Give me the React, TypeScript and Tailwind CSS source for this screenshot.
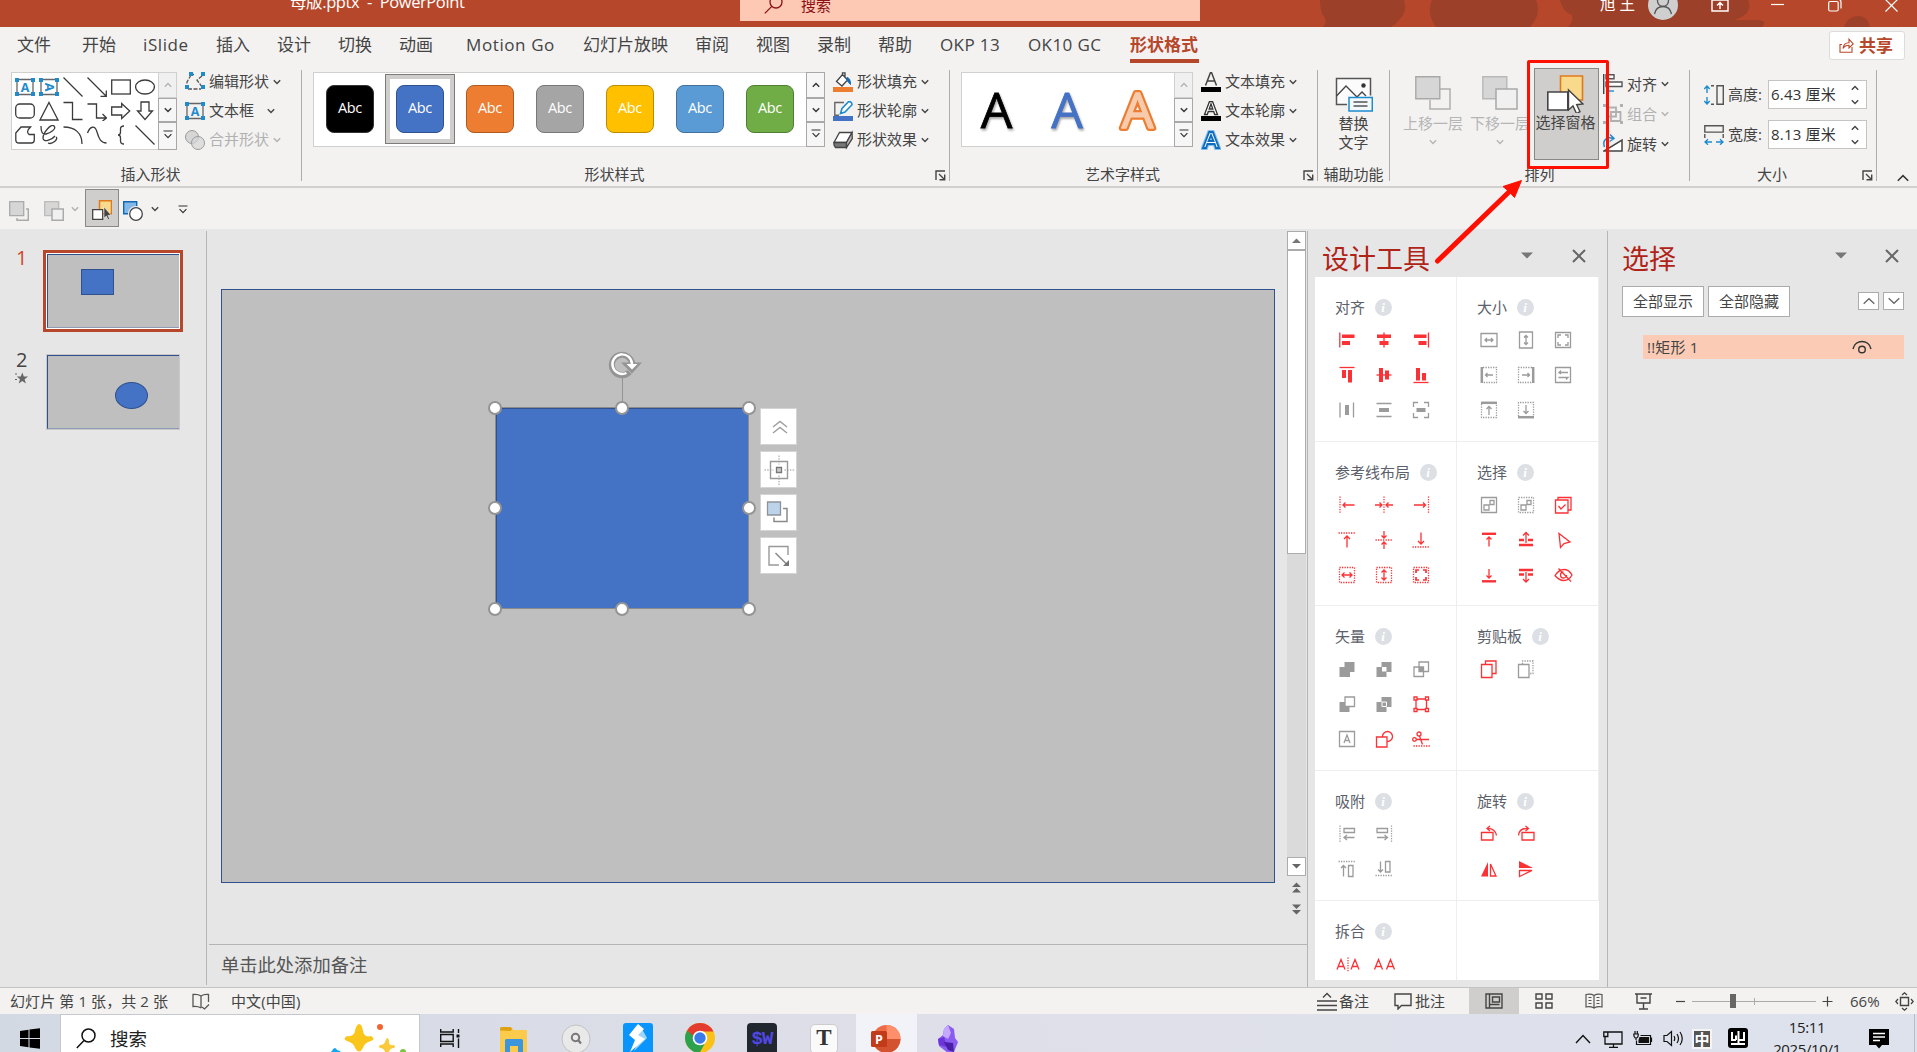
import React from 'react';

type Kids = { children?: React.ReactNode };

const G = '#444444';
const R = '#fa3236';
const M = '#9b9b9b';
const B = '#1e8bcd';

function Ico({ w = 20, h = 20, c = '', children }: Kids & { w?: number; h?: number; c?: string }) {
  return (
    <svg width={w} height={h} viewBox={`0 0 ${w} ${h}`} fill="none" className={`shrink-0 ${c}`}>
      {children}
    </svg>
  );
}

function Chev({ color = G, c = '', up = false }: { color?: string; c?: string; up?: boolean }) {
  return (
    <Ico w={8} h={6} c={c}>
      <path d={up ? 'M.8 4.8 4 1.6l3.2 3.2' : 'M.8 1.2 4 4.4l3.2-3.2'} stroke={color} strokeWidth="1.4" />
    </Ico>
  );
}

function More({ c = '' }: { c?: string }) {
  return (
    <Ico w={10} h={9} c={c}>
      <path d="M.5 1h9M1.6 4.2 5 7.6l3.4-3.4" stroke="#333" strokeWidth="1.2" />
    </Ico>
  );
}

/* ---------- title bar ---------- */

function TitleBar() {
  return (
    <header className="relative flex h-[27px] shrink-0 items-start overflow-hidden bg-[#b7472a] text-white">
      <svg width="597" height="27" className="absolute right-0 top-0" fill="#9c4029">
        <path d="M0 0h84q4 12-5 20-4 5-8 7H3q6-6-1-13Q0 6 0 0Z" />
        <path d="M112 0h104q6 14-6 27H116q-10-14-4-27Z" />
        <path d="M240 0h188q6 14-14 20l20 0q12 0 10 4l-2 3H248q6-6 4-12-10-4-12-15Z" />
        <path d="M524 27q4-11 14-11t12 11Z" />
      </svg>
      <div className="relative ml-[290px] -mt-[9px] w-[450px] whitespace-pre text-[16.5px] leading-[22px] tracking-[-0.4px]">母版.pptx&nbsp; -&nbsp; PowerPoint</div>
      <div className="relative flex h-[21px] w-[460px] items-start bg-[#fdc9b5] text-[#8c1116]">
        <Ico w={20} h={20} c="ml-[24px] -mt-[6px]">
          <circle cx="12" cy="8" r="6" stroke="#8c1116" strokeWidth="1.3" />
          <path d="M7.8 12.4.8 19.4" stroke="#8c1116" strokeWidth="1.3" />
        </Ico>
        <div className="-mt-[5px] ml-[17px] text-[15px] leading-[20px]">搜索</div>
      </div>
      <div className="relative -mt-[7px] ml-[400px] text-[15.5px] leading-[22px]">旭 王</div>
      <Ico w={30} h={30} c="relative -mt-[10px] ml-[13px]">
        <circle cx="15" cy="15" r="15" fill="#cfcfcf" />
        <circle cx="15" cy="11" r="5.5" stroke="#555" strokeWidth="1.3" />
        <path d="M6.5 24c1-5 4-7.500 8.500-7.500s7.500 2.500 8.500 7.500" stroke="#555" strokeWidth="1.300" />
      </Ico>
      <Ico w={18} h={16} c="relative -mt-[4px] ml-[33px]">
        <path d="M1 1h16v14H1zM1 4h16M9 13V7M6 9.500 9 6.500l3 3" stroke="#fff" strokeWidth="1.400" />
      </Ico>
      <Ico w={13} h={8} c="relative ml-[42px]">
        <path d="M0 4.500h13" stroke="#fff" strokeWidth="1.200" />
      </Ico>
      <Ico w={14} h={14} c="relative -mt-[2px] ml-[44px]">
        <rect x=".7" y="3.500" width="9.500" height="9.500" rx="1.500" stroke="#fff" strokeWidth="1.200" />
        <path d="M3.500 1h6q3.500 0 3.500 3.500v6" stroke="#fff" strokeWidth="1.200" />
      </Ico>
      <Ico w={13} h={13} c="relative -mt-[1px] ml-[43px]">
        <path d="m.5.5 12 12M12.500.5l-12 12" stroke="#fff" strokeWidth="1.200" />
      </Ico>
    </header>
  );
}

/* ---------- tabs ---------- */

const tabs: [string, string][] = [
  ['文件', 'w-[65px]'],
  ['开始', 'w-[61px]'],
  ['iSlide', 'w-[73px] tracking-[0.6px]'],
  ['插入', 'w-[61px]'],
  ['设计', 'w-[61px]'],
  ['切换', 'w-[61px]'],
  ['动画', 'w-[67px]'],
  ['Motion Go', 'w-[117px] tracking-[0.6px]'],
  ['幻灯片放映', 'w-[112px]'],
  ['审阅', 'w-[61px]'],
  ['视图', 'w-[61px]'],
  ['录制', 'w-[61px]'],
  ['帮助', 'w-[62px]'],
  ['OKP 13', 'w-[88px] tracking-[0.4px]'],
  ['OK10 GC', 'w-[102px] tracking-[0.4px]'],
];

function Tabs() {
  return (
    <nav className="flex h-[39px] shrink-0 items-start pl-[17px] pt-[5px] text-[17px] leading-[26px] text-[#444]">
      {tabs.map(([t, w]) => (
        <div key={t} className={`${w} shrink-0 whitespace-nowrap`}>{t}</div>
      ))}
      <div className="h-[31px] w-[69px] shrink-0 whitespace-nowrap border-b-4 border-[#b7472a] font-bold text-[#b7472a]">形状格式</div>
      <div className="-mt-px ml-auto mr-[12px] flex h-[29px] w-[76px] items-center rounded-[3px] border border-[#dcdcdc] bg-white font-bold text-[#b7472a]">
        <Ico w={15} h={15} c="ml-[9px] mr-[5px]">
          <path d="M3 6.500H1v7.800h12V9M4 10.500c.5-4 2.500-5.800 6-5.800V1.200L14.200 6 10 10V7.300c-2.800 0-4.500.8-6 3.200Z" stroke="#b7472a" strokeWidth="1.100" />
        </Ico>
        共享
      </div>
    </nav>
  );
}

/* ---------- ribbon ---------- */

function Launcher() {
  return (
    <Ico w={11} h={11}>
      <path d="M1 10V1h9M4 4l5 5M9.700 4.500v5.200H4.500" stroke={G} strokeWidth="1.400" />
    </Ico>
  );
}

function Group({ w, label, launch, children }: Kids & { w: string; label: string; launch?: boolean }) {
  return (
    <section className={`${w} flex shrink-0`}>
      <div className="flex min-w-0 flex-1 flex-col">
        <div className="flex h-[97px] items-start">{children}</div>
        <div className="flex h-[22px] items-center text-[15px] leading-none text-[#444]">
          <div className="flex-1 whitespace-nowrap text-center">{label}</div>
          {launch && (
            <div className="w-[22px] pl-[8px] pt-[3px]">
              <Launcher />
            </div>
          )}
        </div>
      </div>
      <div className="mt-[4px] h-[111px] w-px bg-[#b0aeac]" />
    </section>
  );
}

function Scroller({ off, tall }: { off?: boolean; tall?: boolean }) {
  return (
    <div className="flex w-[19px] shrink-0 flex-col">
      <div className={`flex flex-1 items-center justify-center border ${off ? 'border-[#d2d0ce] bg-[#f0f0f0]' : 'border-[#aaa8a6] bg-[#f6f6f6]'}`}>
        <Chev up color={off ? '#b5b5b5' : '#333'} />
      </div>
      <div className="flex h-[24px] items-center justify-center border border-[#aaa8a6] bg-[#f6f6f6]">
        <Chev color="#333" />
      </div>
      <div className={`flex items-center justify-center border border-[#aaa8a6] bg-[#f6f6f6] ${tall ? 'h-[28px] pb-[3px]' : 'h-[25px] pb-[2px]'}`}>
        <More />
      </div>
    </div>
  );
}

function TextBoxIcon({ turn }: { turn?: boolean }) {
  return (
    <>
      <path d="M2 2.500h16v15H2z" stroke="#666" strokeWidth="1.300" />
      <path d="M0 1h4v4H0zM16 1h4v4h-4zM0 15h4v4H0zM16 15h4v4h-4z" fill={B} />
      <text x="10" y="14.500" textAnchor="middle" fontSize="12.500" fontWeight="700" fill={B} transform={turn ? 'rotate(90 10 10)' : undefined}>A</text>
    </>
  );
}

const S = { stroke: '#3b3b3b', strokeWidth: 1.3 };
const shapes: React.ReactNode[] = [
  <TextBoxIcon />,
  <TextBoxIcon turn />,
  <path d="m.5.5 19 19" {...S} />,
  <path d="m.5.5 18.500 18.500M19.300 13.500v5.800h-5.800" {...S} />,
  <rect x=".7" y="3" width="18.600" height="14" {...S} />,
  <ellipse cx="10" cy="10" rx="9.400" ry="7" {...S} />,
  <rect x=".7" y="3" width="18.600" height="14" rx="4" {...S} />,
  <path d="M10 1.500 19 19H1Z" {...S} />,
  <path d="M.5 1.500h9v17h10" {...S} />,
  <path d="M.5 3h9v14h9.500M15.500 13l4 4-4 3" {...S} />,
  <path d="M.7 6h10V2.500l8 7.500-8 7.500V14H.7Z" {...S} />,
  <path d="M6 1h8v9h3.500L10 18.500 2.500 10H6Z" {...S} />,
  <path d="M.8 8 6 2h9.500q-5 5-1.500 7.500h5.300V15q0 3-3 3H4q-3.200 0-3.200-3Z" {...S} />,
  <path d="M2 1c0 5 1 9 5 8s11-5 8-8S4 8 4 13s9 2 12-2M9 18c4 2 11-4 8-6" {...S} />,
  <path d="M.5 2C12 2 19 8 19 19" {...S} />,
  <path d="M.5 8C3 1 8 0 10 7s4 11 9.500 11" {...S} />,
  <path d="M13 1c-3 0-3.500 1-3.500 3v3c0 2-.8 3-2.500 3 1.700 0 2.500 1 2.500 3v3c0 2 .5 3 3.500 3" {...S} />,
  <path d="m.5.5 19 19" {...S} />,
];

function ShapeGallery() {
  return (
    <div className="ml-[11px] mt-[6px] flex h-[78px] w-[166px] shrink-0 border border-[#d2d0ce] bg-white">
      <div className="grid w-[146px] grid-cols-[repeat(6,24px)] content-start gap-y-[4px] pl-[3px] pt-[4px]">
        {shapes.map((s, i) => (
          <Ico key={i}>{s}</Ico>
        ))}
      </div>
      <div className="-my-px -mr-px flex">
        <Scroller off tall />
      </div>
    </div>
  );
}

type RowDef = { icon: React.ReactNode; label: string; gap?: string; off?: boolean };

function CommandColumn({ rows, c, rowH = 'h-[29px]' }: { rows: RowDef[]; c: string; rowH?: string }) {
  return (
    <div className={`${c} flex shrink-0 flex-col`}>
      {rows.map((r) => (
        <div key={r.label} className={`flex items-center ${rowH}`}>
          <Ico>{r.icon}</Ico>
          <span className={`ml-[4px] whitespace-nowrap text-[15px] leading-none ${r.off ? 'text-[#b1b1b1]' : 'text-[#444]'}`}>{r.label}</span>
          <Chev c={r.gap ?? 'ml-[4px]'} color={r.off ? '#b1b1b1' : G} />
        </div>
      ))}
    </div>
  );
}

const tiles: [string, string][] = [
  ['bg-black', 'border-[#333]'],
  ['bg-[#4472c4]', 'border-[#2f528f]'],
  ['bg-[#ed7d31]', 'border-[#ae5a21]'],
  ['bg-[#a5a5a5]', 'border-[#787878]'],
  ['bg-[#ffc000]', 'border-[#bc8c00]'],
  ['bg-[#5b9bd5]', 'border-[#41719c]'],
  ['bg-[#70ad47]', 'border-[#507e32]'],
];

function StyleGallery() {
  return (
    <div className="ml-[11px] mt-[6px] flex h-[75px] w-[512px] shrink-0 border border-[#d2d0ce] bg-white">
      <div className="flex w-[492px] pl-px pt-px">
        {tiles.map(([bg, bd], i) => (
          <div key={bg} className={`flex h-[70px] w-[70px] shrink-0 items-center justify-center ${i === 1 ? 'border border-[#7d7b79] shadow-[inset_0_0_0_4px_#d0cecc]' : ''}`}>
            <div className={`flex h-[48px] w-[48px] items-center justify-center rounded-[8px] border pb-[2px] font-['Open_Sans'] text-[14.5px] tracking-tight text-white ${bg} ${bd}`}>Abc</div>
          </div>
        ))}
      </div>
      <div className="-my-px -mr-px flex">
        <Scroller />
      </div>
    </div>
  );
}

function WordArtGallery() {
  return (
    <div className="ml-[11px] mt-[6px] flex h-[75px] w-[232px] shrink-0 border border-[#d2d0ce] bg-white">
      <svg width="212" height="73" className="shrink-0 font-['Open_Sans']" fontSize="50" textAnchor="middle" fontWeight="500">
        <g className="[filter:drop-shadow(1px_2px_1px_rgba(0,0,0,0.35))]" strokeWidth=".8">
          <text x="34.500" y="55" fill="#000" stroke="#000">A</text>
          <text x="105" y="55" fill="#4472c4" stroke="#4472c4">A</text>
        </g>
        <text x="175.500" y="55" fill="#f8cbad" stroke="#ed7d31" strokeWidth="6" strokeLinejoin="round">A</text>
        <text x="175.500" y="55" fill="#f8cbad" stroke="#f8cbad" strokeWidth="1.500" strokeLinejoin="round">A</text>
      </svg>
      <div className="-my-px -mr-px flex">
        <Scroller off />
      </div>
    </div>
  );
}

const editRows: RowDef[] = [
  {
    label: '编辑形状',
    icon: (
      <>
        <path d="M5 2.500h4M6 3 2 10v6M3 17h13M17 4l-5 4 5 7" stroke="#555" strokeWidth="1.300" strokeDasharray="4 1.500" />
        <path d="M4 0h4v4H4zM16 0h4v4h-4zM0 13h4v4H0zM16 13h4v4h-4z" fill={B} />
      </>
    ),
  },
  { label: '文本框', gap: 'ml-[13px]', icon: <TextBoxIcon /> },
  {
    label: '合并形状',
    off: true,
    icon: (
      <>
        <circle cx="7" cy="7" r="6.500" fill="#d6d6d6" stroke="#9a9a9a" />
        <circle cx="13" cy="13" r="6.500" fill="#d6d6d6" fillOpacity=".7" stroke="#9a9a9a" />
      </>
    ),
  },
];

const shapeRows: RowDef[] = [
  {
    label: '形状填充',
    icon: (
      <>
        <path d="m3.500 9.500 6-7 5 5.500-5.500 6ZM9.500 2.500V.8h2.500V5" stroke="#444" strokeWidth="1.300" fill="#fff" />
        <path d="M14 5.500q3.500.5 3.500 7l-3.500-4Z" fill="#1268b3" stroke="#1268b3" />
        <path d="M0 15h20v5H0z" fill="#ed7d31" />
      </>
    ),
  },
  {
    label: '形状轮廓',
    icon: (
      <>
        <path d="M11 1.500H1.800v12.700H6" stroke="#666" strokeWidth="1.400" />
        <path d="m7.500 12.500 1.500-5L15.500.8q3.500-.5 3.500 3L12 11Z" stroke={B} strokeWidth="1.600" fill="#fff" />
        <path d="M0 15h20v5H0z" fill="#4472c4" />
      </>
    ),
  },
  {
    label: '形状效果',
    icon: (
      <>
        <path d="M6.500 2.500h12.500l-5.500 10H1Z" fill="#fff" stroke="#444" strokeWidth="1.300" />
        <path d="M1 12.500h12.500v5H2.500L1 15Z" fill="#777" stroke="#444" strokeWidth="1.300" />
        <path d="m19 2.500.3 6-5.800 9v-5Z" fill="#bbb" stroke="#444" strokeWidth="1.300" />
      </>
    ),
  },
];

const textRows: RowDef[] = [
  {
    label: '文本填充',
    icon: (
      <>
        <path d="m4.500 13.500 5-13h1l5 13M6.300 9h7.400" stroke="#444" strokeWidth="1.500" />
        <path d="M0 15h20v5H0z" fill="#000" />
      </>
    ),
  },
  {
    label: '文本轮廓',
    icon: (
      <>
        <path d="M3.500 13.500 8.400.7h3.200l4.900 12.800h-2.800l-1-3H7.300l-1 3ZM8.200 8h3.600L10 3Z" stroke="#333" strokeWidth="1.300" fill="#fff" />
        <path d="M0 15h20v5H0z" fill="#000" />
      </>
    ),
  },
  {
    label: '文本效果',
    icon: (
      <>
        <path d="M2 18 8.200 2h3.600L18 18h-3l-1.400-4H6.400L5 18ZM7.500 11h5L10 5Z" stroke="#7fc0ee" strokeWidth="4" />
        <path d="M2 18 8.200 2h3.600L18 18h-3l-1.400-4H6.400L5 18ZM7.500 11h5L10 5Z" stroke="#0f6cbd" strokeWidth="1.800" fill="#fff" />
      </>
    ),
  },
];

const arrangeRows: RowDef[] = [
  {
    label: '对齐',
    icon: (
      <>
        <path d="M.7 0v20" stroke="#444" strokeWidth="1.400" />
        <path d="M3 .8h8v4H3zM3 8h16v4.500H3z" stroke="#555" strokeWidth="1.400" fill="#fff" />
        <path d="M3 17h8" stroke={B} strokeWidth="1.400" />
      </>
    ),
  },
  {
    label: '组合',
    off: true,
    icon: (
      <>
        <path d="M4 3.500h9v9H4zM8 8h9.500v9H8z" stroke="#b0b0b0" strokeWidth="1.800" />
        <path d="M0 0h3v3H0zM17 0h3v3h-3zM0 17h3v3H0zM17 17h3v3h-3z" fill="#b0b0b0" />
      </>
    ),
  },
  {
    label: '旋转',
    icon: (
      <>
        <path d="M1 17h18V6Z" stroke="#444" strokeWidth="1.500" fill="#fff" />
        <path d="M1.500 13C-1 6 4 2 10 4.500M7 .5l4 4-4.500 3" stroke={B} strokeWidth="1.500" />
      </>
    ),
  },
];

function BigButton({ icon, lines, c, chev, off }: { icon: React.ReactNode; lines: string[]; c: string; chev?: boolean; off?: boolean }) {
  return (
    <div className={`flex shrink-0 flex-col items-center text-[15px] leading-[19px] ${off ? 'text-[#b5b5b5]' : 'text-[#444]'} ${c}`}>
      <Ico w={38} h={38}>{icon}</Ico>
      {lines.map((l) => (
        <div key={l} className="whitespace-nowrap">{l}</div>
      ))}
      {chev && <Chev c="mt-[6px]" color="#b5b5b5" />}
    </div>
  );
}

function SizeRow({ icon, label, value }: { icon: React.ReactNode; label: string; value: string }) {
  return (
    <div className="flex h-[29px] items-center">
      <Ico>{icon}</Ico>
      <span className="ml-[4px] w-[40px] whitespace-nowrap text-[15px] leading-none text-[#444]">{label}</span>
      <div className="flex h-[29px] w-[99px] items-center justify-between border border-[#c6c4c2] bg-white pl-[2px] pr-[7px]">
        <span className="whitespace-nowrap text-[15px] leading-none tracking-[0.2px] text-[#333]">{value}</span>
        <div className="flex flex-col gap-[8px]">
          <Chev up />
          <Chev />
        </div>
      </div>
    </div>
  );
}

function SelectPaneGlyph() {
  return (
    <>
      <path d="M14.500 1h22v24h-22z" fill="#f9d98c" stroke="#e07b1a" strokeWidth="1.600" />
      <path d="M1.800 17h20v18h-20z" fill="#fff" stroke="#444" strokeWidth="1.600" />
      <path d="m22.500 15 0 20 4.500-4 3.500 7.500 3.500-1.800-3.300-7 6.300-.7Z" fill="#fff" stroke="#444" strokeWidth="1.400" />
    </>
  );
}

function Ribbon() {
  return (
    <div className="flex h-[122px] shrink-0 border-b-2 border-[#d2d0ce]">
      <Group w="w-[302px]" label="插入形状">
        <ShapeGallery />
        <CommandColumn rows={editRows} c="ml-[8px] mt-[1px]" />
      </Group>
      <Group w="w-[648px]" label="形状样式" launch>
        <StyleGallery />
        <CommandColumn rows={shapeRows} c="ml-[8px] mt-[1px]" />
      </Group>
      <Group w="w-[368px]" label="艺术字样式" launch>
        <WordArtGallery />
        <CommandColumn rows={textRows} c="ml-[8px] mt-[1px]" />
      </Group>
      <Group w="w-[72px]" label="辅助功能">
        <BigButton
          c="mx-auto mt-[10px]"
          lines={['替换', '文字']}
          icon={
            <>
              <path d="M12 28.500H1.500v-26h34v17" stroke="#555" strokeWidth="1.500" fill="#fbfbfb" />
              <path d="m1.500 20 9.500-10 11 11 5-5 4 4" stroke="#444" strokeWidth="1.300" />
              <circle cx="28.500" cy="9.500" r="2.200" fill="#333" />
              <path d="M14 21.500h23.300V35H14z" fill="#f2f8fc" stroke={B} strokeWidth="1.500" />
              <path d="M18.500 26h14M18.500 30h14" stroke="#555" strokeWidth="1.300" />
            </>
          }
        />
      </Group>
      <Group w="w-[300px]" label="排列">
        <BigButton
          off
          chev
          c="ml-[13px] mt-[10px] w-[60px]"
          lines={['上移一层']}
          icon={
            <>
              <path d="M26 13h10v20H16V24" stroke="#b0b0b0" strokeWidth="1.500" />
              <path d="M1.800.700h24v22h-24z" fill="#d6d6d6" stroke="#a8a8a8" strokeWidth="1.400" />
            </>
          }
        />
        <BigButton
          off
          chev
          c="ml-[7px] mt-[10px] w-[60px]"
          lines={['下移一层']}
          icon={
            <>
              <path d="M1.800.700h24v22h-24z" fill="#d6d6d6" stroke="#b8b8b8" strokeWidth="1.400" />
              <path d="M15 13h21v20H15z" fill="#f0f0f0" stroke="#a8a8a8" strokeWidth="1.500" />
            </>
          }
        />
        <div className="ml-[4px] mt-[2px] flex h-[92px] w-[65px] shrink-0 justify-center border border-[#8a8886] bg-[#d0cecc] pr-[2px]">
          <BigButton c="mt-[6px]" lines={['选择窗格']} icon={<SelectPaneGlyph />} />
        </div>
        <CommandColumn rows={arrangeRows} rowH="h-[30px]" c="ml-[4px] mt-[3px]" />
      </Group>
      <Group w="w-[187px]" label="大小" launch>
        <div className="ml-[14px] mt-[14px] flex flex-col gap-[11px]">
          <SizeRow
            label="高度:"
            value="6.43 厘米"
            icon={
              <>
                <path d="M3 1v7M3 12v7M.3 4 3 1l2.700 3M.3 16 3 19l2.700-3" stroke={B} strokeWidth="1.400" />
                <path d="M13 .8h6.300v18.400H13zM7 .8h3M7 19.200h3" stroke="#555" strokeWidth="1.400" />
              </>
            }
          />
          <SizeRow
            label="宽度:"
            value="8.13 厘米"
            icon={
              <>
                <path d="M1 17h7M12 17h7M4 14.300 1 17l3 2.700M16 14.300l3 2.700-3 2.700" stroke={B} strokeWidth="1.400" />
                <path d="M.8.800h18.400v6.300H.8zM.8 9v4M19.200 9v4" stroke="#555" strokeWidth="1.400" />
              </>
            }
          />
        </div>
      </Group>
      <Ico w={12} h={8} c="ml-[20px] mt-[108px]">
        <path d="M.8 6.800 6 1.600l5.200 5.200" stroke="#333" strokeWidth="1.500" />
      </Ico>
    </div>
  );
}

function QuickAccess() {
  return (
    <div className="flex h-[41px] shrink-0 items-center pb-px">
      <Ico c="ml-[9px] mt-[5px]">
        <path d="M.7.700h14v14H.7z" fill="#d6d6d6" stroke="#aaa" strokeWidth="1.300" />
        <path d="M17 8h2.300v11.300H8V17" stroke="#aaa" strokeWidth="1.500" />
      </Ico>
      <Ico c="ml-[15px] mt-[5px]">
        <path d="M.7.700h14v14H.7z" fill="#d6d6d6" stroke="#bbb" strokeWidth="1.300" />
        <path d="M8 8h11.300v11.300H8z" fill="#f0f0f0" stroke="#aaa" strokeWidth="1.500" />
      </Ico>
      <Chev c="ml-[7px] mt-px" color="#b1b1b1" />
      <div className="ml-[6px] flex h-[38px] w-[34px] items-center justify-center border border-[#8a8886] bg-[#d0cecc]">
        <Ico c="mt-[4px]">
          <path d="M7.500.800h12v13h-12z" fill="#f9d98c" stroke="#e07b1a" strokeWidth="1.500" />
          <path d="M.7 9.700h10v9.600H.7z" fill="#fff" stroke="#444" strokeWidth="1.300" />
          <path d="M12 7v11l2.300-2 1.800 3.800 1.500-.8-1.700-3.500 3-.5Z" fill="#444" stroke="#fff" strokeWidth=".5" />
        </Ico>
      </div>
      <Ico c="ml-[4px] mt-[5px]">
        <path d="M.7.700h13v12H.7z" fill="#83b9ea" stroke="#1268b3" strokeWidth="1.400" />
        <circle cx="13" cy="13" r="8" fill="#f3f2f1" />
        <circle cx="13" cy="13" r="6.300" fill="#fff" stroke="#444" strokeWidth="1.300" />
      </Ico>
      <Chev c="ml-[8px] mt-px" />
      <More c="ml-[19px] mt-[2px]" />
    </div>
  );
}

/* ---------- slide thumbnails ---------- */

function Thumbnails() {
  return (
    <aside className="flex w-[206px] shrink-0 flex-col">
      <div className="mt-[21px] flex">
        <div className="w-[43px] pl-[16px] text-[20px] leading-[16px] text-[#d24726]">1</div>
        <div className="h-[82px] w-[140px] border-[3px] border-[#b7472a] bg-white p-px">
          <div className="h-full border-b border-l border-t border-b-[#8f9bb5] border-l-[#2f528f] border-t-[#2f528f] bg-[#bfbfbf]">
            <div className="ml-[33px] mt-[14px] h-[26px] w-[33px] border border-[#2f528f] bg-[#4472c4]" />
          </div>
        </div>
      </div>
      <div className="mt-[22px] flex">
        <div className="flex w-[46px] flex-col pl-[16px] text-[20px] text-[#444]">
          <div className="h-[18px] leading-[11px]">2</div>
          <Ico w={13} h={12} c="-ml-px">
            <path d="m7.300.5 1.500 4H13L9.600 7.200l1.300 4.300L7.300 9l-3.600 2.500L5 7.200 1.800 4.600h4Z" fill="#666" />
            <path d="M0 2h2M0 7.500h2" stroke="#666" />
          </Ico>
        </div>
        <div className="h-[76px] w-[134px] border border-[#c9c9c9]">
          <div className="h-full border-b border-l border-t border-b-[#8f9bb5] border-l-[#2f528f] border-t-[#2f528f] bg-[#bfbfbf]">
            <div className="ml-[67px] mt-[26px] h-[27px] w-[33px] rounded-[50%] border border-[#2f528f] bg-[#4472c4]" />
          </div>
        </div>
      </div>
    </aside>
  );
}

/* ---------- slide canvas ---------- */

const handles = ['left-[-8px] top-[-7px]', 'left-[119px] top-[-7px]', 'left-[246px] top-[-7px]', 'left-[-8px] top-[93px]', 'left-[246px] top-[93px]', 'left-[-8px] top-[194px]', 'left-[119px] top-[194px]', 'left-[246px] top-[194px]'];

const sideIcons: React.ReactNode[] = [
  <path d="m11 19 7-5.500 7 5.500M11 25l7-5.500 7 5.500" transform="translate(1 -1)" stroke="#a0a0a0" strokeWidth="1.500" />,
  <>
    <path d="M9.500 9.500h17v17h-17z" stroke="#999" strokeWidth="1.400" />
    <path d="M15.500 15.500h5v5h-5z" fill="#ccc" stroke="#777" strokeWidth="1.300" />
    <path d="M18 3.500v9M18 23.500v10M3.500 18h9M23.500 18h10" stroke="#999" strokeDasharray="1.500 1.200" />
  </>,
  <>
    <path d="M6.500 7h13v13h-13z" fill="#bdd3ea" stroke="#8f9399" strokeWidth="1.300" />
    <path d="M22 13.500h4v13H13V22.500" stroke="#8a8a8a" strokeWidth="1.500" />
  </>,
  <>
    <path d="M27 17V8.500H8v18.500h10" stroke="#999" strokeWidth="1.400" />
    <path d="m14.500 15 12 12" stroke="#8a8a8a" strokeWidth="1.500" />
    <path d="M28 22v6h-6Z" fill="#777" />
  </>,
];

function Slide() {
  return (
    <div className="relative ml-[14px] mt-[60px] h-[594px] w-[1054px] border border-[#2f528f] bg-[#bfbfbf]">
      <div className="absolute left-[273px] top-[117px] h-[202px] w-[254px] border border-[#8c8c8c] bg-[#4472c4] shadow-[inset_1px_1px_0_#2f528f]">
        <div className="absolute left-[126px] top-[-31px] h-[30px] w-px bg-[#949494]" />
        <svg width="34" height="28" viewBox="0 0 34 28" fill="none" className="absolute left-[112px] top-[-57px]">
          <path d="M21.500 21A10.200 10.200 0 1 1 24.200 13" stroke="#949494" strokeWidth="6" />
          <path d="M13 11.500h21L24 22.500Z" fill="#949494" />
          <path d="M18.500 22A9.800 9.800 0 1 1 24 13" stroke="#fff" strokeWidth="2.400" />
          <path d="M18.500 13h11L24 18.500Z" fill="#fff" />
        </svg>
        {handles.map((p) => (
          <div key={p} className={`absolute h-[14px] w-[14px] rounded-full border-2 border-[#949494] bg-white ${p}`} />
        ))}
      </div>
      <div className="absolute left-[538px] top-[118px] flex flex-col gap-[6px]">
        {sideIcons.map((s, i) => (
          <div key={i} className="h-[37px] w-[37px] border border-[#d4d4d4] bg-white">
            <Ico w={35} h={35}>{s}</Ico>
          </div>
        ))}
      </div>
    </div>
  );
}

function Editor() {
  return (
    <main className="flex min-w-0 flex-1 flex-col">
      <div className="flex h-[715px]">
        <div className="w-[1080px] shrink-0">
          <Slide />
        </div>
        <div className="mt-[2px] flex w-[19px] flex-col items-center">
          <div className="flex h-[19px] w-[19px] items-center justify-center border border-[#ababab] bg-white">
            <Ico w={9} h={5}><path d="M0 5 4.500.500 9 5Z" fill="#777" /></Ico>
          </div>
          <div className="h-[304px] w-[19px] border border-[#ababab] bg-white" />
          <div className="h-[303px] w-[19px] bg-[#dadada]" />
          <div className="flex h-[19px] w-[19px] items-center justify-center border border-[#ababab] bg-white">
            <Ico w={9} h={5}><path d="M0 0 4.500 4.500 9 0Z" fill="#666" /></Ico>
          </div>
          <Ico w={11} h={11} c="mt-[6px]">
            <path d="M1 5 5.500.500 10 5ZM1 10.500 5.500 6 10 10.500Z" fill="#666" />
          </Ico>
          <Ico w={11} h={11} c="mt-[11px]">
            <path d="M1 .500 5.500 5 10 .500ZM1 6l4.500 4.500L10 6Z" fill="#666" />
          </Ico>
        </div>
      </div>
      <div className="ml-[2px] flex-1 border-t border-[#b5b5b5] pl-[12px] text-[18.3px] leading-[39px] text-[#555]">单击此处添加备注</div>
    </main>
  );
}

/* ---------- design tools pane ---------- */

function PaneTitle({ title, c }: { title: string; c: string }) {
  return (
    <div className="flex h-[48px] items-center pl-[14px] pt-[10px]">
      <h2 className="flex-1 whitespace-nowrap text-[27px] leading-none text-[#b02318]">{title}</h2>
      <Ico w={12} h={7} c="-mt-[6px]"><path d="M0 .500h12L6 6.500Z" fill="#777" /></Ico>
      <Ico w={14} h={14} c={`-mt-[5px] ${c}`}><path d="m1 1 12 12M13 1 1 13" stroke="#666" strokeWidth="2" /></Ico>
    </div>
  );
}

const r = { stroke: R, strokeWidth: 1.3 };
const m = { stroke: M, strokeWidth: 1.3 };
const dot = { strokeDasharray: '1.3 1.2' };
const corners = 'M4 7V4h3M11 4h3v3M14 11v3h-3M7 14H4v-3';

const alignIcons = [
  <><path d="M1.800 1.500v15" {...r} /><path d="M4 3.500h12.500V7H4zM4 10h8v4H4z" fill={R} /></>,
  <><path d="M9 1.500v15" {...r} /><path d="M2 3.500h14V7H2zM4.500 10h9v4h-9z" fill={R} /></>,
  <><path d="M16.500 1.500v15" {...r} /><path d="M2 3.500h12.500V7H2zM6.500 10h8v4h-8z" fill={R} /></>,
  <><path d="M1.500 1.500h15" {...r} /><path d="M4 4h4v8H4zM10 4h4v12.500h-4z" fill={R} /></>,
  <><path d="M1.500 9h15" {...r} /><path d="M4 2h4v14H4zM10 4.500h4v9h-4z" fill={R} /></>,
  <><path d="M1.500 16.500h15" {...r} /><path d="M4 2h4v12.500H4zM10 7h4v7.500h-4z" fill={R} /></>,
  <><path d="M2 1.500v15M15.500 1.500v15" {...m} /><path d="M7 4h4v10H7z" fill={M} /></>,
  <><path d="M1.500 2.500h15M1.500 15.500h15" {...m} /><path d="M4 7h10v4H4z" fill={M} /></>,
  <><path d="M1.500 6V1.500H6M12 1.500h4.500V6M16.500 12v4.500H12M6 16.500H1.500V12" {...m} /><path d="M4.500 7h9v4h-9z" fill={M} /></>,
];

const sizeIcons = [
  <path d="M1 2.500h16v13H1zM5 9h8M7 7 5 9l2 2M11 7l2 2-2 2" {...m} />,
  <path d="M2.500 1h13v16h-13zM9 4.500v9M7 6.500l2-2 2 2M7 11.500l2 2 2-2" {...m} />,
  <><path d="M1.500 1.500h15v15h-15z" {...m} /><path d={corners} {...m} /></>,
  <><path d="M3 1.500h13.500v15H3" {...m} {...dot} /><path d="M1.800 1v16" stroke={M} strokeWidth="2.500" /><path d="M5.500 9h7.500M7.500 7l-2 2 2 2" {...m} /></>,
  <><path d="M15 1.500H1.500v15H15" {...m} {...dot} /><path d="M16.200 1v16" stroke={M} strokeWidth="2.500" /><path d="M5 9h7.500M10.500 7l2 2-2 2" {...m} /></>,
  <path d="M1.500 1.500h15v15h-15zM14 6.500H5l2-2M4.500 11.500H14l-2 2M5 6.500l2 1.500" {...m} />,
  <><path d="M1.500 3v13.500h15V3" {...m} {...dot} /><path d="M1 1.800h16" stroke={M} strokeWidth="2.500" /><path d="M9 14V5.500M6.500 8 9 5.500 11.500 8" {...m} /></>,
  <><path d="M1.500 15V1.500h15V15" {...m} {...dot} /><path d="M1 16.200h16" stroke={M} strokeWidth="2.500" /><path d="M9 4v8.500M6.500 10 9 12.500 11.500 10" {...m} /></>,
];

const guideIcons = [
  <><path d="M2 .500v17" {...r} {...dot} /><path d="M5 9h11.500M7.500 6.500 5 9l2.500 2.500" {...r} /></>,
  <><path d="M9 .500v17" {...r} {...dot} /><path d="M0 9h6.500M4.500 6.500 7 9l-2.500 2.500M18 9h-6.500M13.500 6.500 11 9l2.500 2.500" {...r} /></>,
  <><path d="M16.500.500v17" {...r} {...dot} /><path d="M2 9h11.500M11 6.500 13.500 9 11 11.500" {...r} /></>,
  <><path d="M.500 2h17" {...r} {...dot} /><path d="M9 16.500V5M6 8l3-3 3 3" {...r} /></>,
  <><path d="M.500 9h17" {...r} {...dot} /><path d="M9 0v6.500M6.500 4.500 9 7l2.500-2.500M9 18v-6.500M6.500 13.500 9 11l2.500 2.500" {...r} /></>,
  <><path d="M.500 16h17" {...r} {...dot} /><path d="M9 1.500V13M6 10l3 3 3-3" {...r} /></>,
  <><path d="M1.500 1.500h15v15h-15z" {...r} {...dot} /><path d="M4 9h10M6.500 6.500 4 9l2.500 2.500M11.500 6.500 14 9l-2.500 2.500" {...r} /></>,
  <><path d="M1.500 1.500h15v15h-15z" {...r} {...dot} /><path d="M9 4v10M6.500 6.500 9 4l2.500 2.500M6.500 11.500 9 14l2.500-2.500" {...r} /></>,
  <><path d="M1.500 1.500h15v15h-15z" {...r} {...dot} /><path d={corners} stroke={R} strokeWidth="1.700" /></>,
];

const selectIcons = [
  <path d="M1.500 1.500h15v15h-15zM4 9h5v5H4zM10 4.500h4v4h-4z" {...m} />,
  <><path d="M1.500 1.500h15v15h-15z" {...m} {...dot} /><path d="M4 9h5v5H4zM10 4.500h4v4h-4z" {...m} /></>,
  <path d="M1.500 4h12.500v13H1.500zM4 4V1.500h13V14h-3M4.500 10l2.500 3 4.500-4.500" {...r} />,
  <><path d="M2 2.800h14" stroke={R} strokeWidth="2.400" /><path d="M9 15.500V6M6.500 8.500 9 6l2.500 2.500" {...r} /></>,
  <><path d="M2 9h5M11 9h5M2 14h14" stroke={R} strokeWidth="2.300" /><path d="M9 12V1.500M6 4.500l3-3 3 3" {...r} /></>,
  <path d="M5 2.500 16 11l-6 1.500-3.500 4Z" {...r} />,
  <><path d="M2 15.300h14" stroke={R} strokeWidth="2.400" /><path d="M9 3v9M6.500 9.500 9 12l2.500-2.500" {...r} /></>,
  <><path d="M2 4h14M2 8.500h5M11 8.500h5" stroke={R} strokeWidth="2.300" /><path d="M9 6v10M6 13l3 3 3-3" {...r} /></>,
  <path d="M1 9.500Q5 3.500 10 3.500t8 5.500q-3 5.500-8 5.500T1 9.500ZM4.500 2.500 17 15.500M12.500 9a3 3 0 1 1-3-3" {...r} />,
];

const vectorIcons = [
  <path d="M6.500 2H16.500v10H12v5H1.500V7H6.500Z" fill={M} />,
  <><path d="M6.500 2h10v10h-5v5H1.500V7h5Z" fill={M} /><path d="M7 7h4.500v4.500H7z" fill="#fff" /></>,
  <><path d="M7 2h9.500v9.500H7zM2 7h9.500v9.500H2z" {...m} /><path d="M7 7h4.500v4.500H7z" fill={M} /></>,
  <><path d="M1.500 7h10v10h-10z" fill={M} /><path d="M7 2h9.500v9.500H7z" {...m} fill="#fff" /></>,
  <><path d="M6.500 2h10v10h-5v5H1.500V7h5Z" fill={M} /><path d="M7 7h4.500v4.500H7z" stroke="#fff" /></>,
  <><path d="M4 4h10.500v10.500H4z" {...r} /><path d="M2 2h3v3H2zM13.500 2h3v3h-3zM2 13.500h3v3H2zM13.500 13.500h3v3h-3z" {...r} fill="#fff" /></>,
  <path d="M1.500 1.500h15v15h-15zM6 13l3-8 3 8M7 10.500h4" {...m} />,
  <><circle cx="12.500" cy="6.500" r="5" {...r} /><path d="M1.500 7h10.500v10H1.500z" {...r} fill="#fff" /></>,
  <><path d="M1.500 16h17" {...r} {...dot} /><path d="M17 9.500H4M7.500 6l3 8.500" {...r} /><circle cx="7" cy="4" r="2" {...r} /><circle cx="2.500" cy="9.500" r="1.800" {...r} /></>,
];

const clipIcons = [
  <path d="M1.500 4.500H12v13H1.500zM5.500 4.500V1h10.500v12.500H12" {...r} />,
  <><path d="M1.500 4.500H12v13H1.500z" {...m} /><path d="M5.500 4V1h10.500v12.500H12" {...m} {...dot} /></>,
];

const snapIcons = [
  <><path d="M2 .500v17" {...m} {...dot} /><path d="M6 3.500h10.500v4H6zM16.500 12.500H6M9 10l-3 2.500L9 15" {...m} /></>,
  <><path d="M16.500.500v17" {...m} {...dot} /><path d="M2 3.500h10.500v4H2zM2 12.500h10.500M9.500 10l3 2.500-3 2.500" {...m} /></>,
  <><path d="M.500 1.500h17" {...m} {...dot} /><path d="M10.500 5.500h4.500v11h-4.500zM5.500 16.500v-11M3 8l2.500-2.500L8 8" {...m} /></>,
  <><path d="M.500 15.500h17" {...m} {...dot} /><path d="M10.500 1.500H15v10.500h-4.500zM5.500 1.500V12M3 9.500 5.500 12 8 9.500" {...m} /></>,
];

const rotateIcons = [
  <path d="M1.500 7.500h11.500v7.500H1.500zM7 3.500q8-.5 9.500 7M10 1 7 3.500 10 6" {...r} />,
  <path d="M5 7.500h12v7.500H5zM11 3.500q-9-.5-9.500 7M8.500 1l3 2.500-3 2.500" {...r} />,
  <><path d="M8 2v14.500H1Z" fill={R} /><path d="M10.500 4v12h5.500Z" {...r} /></>,
  <><path d="M2 1v7h14Z" fill={R} /><path d="M2.500 16.500v-6H15Z" {...r} /></>,
];

const splitIcons = [
  <><path d="M-1 14.500 3 4.500l4 10M.500 11.500h5M13 14.500l4-10 4 10M14.500 11.500h5" {...r} /><path d="M10 2.500v14" {...r} {...dot} /></>,
  <path d="M-1 14.500 3 4.500l4 10M.500 11.500h5M11 14.500l4-10 4 10M12.500 11.500h5" transform="translate(.5 0)" {...r} />,
];

function Cell({ title, icons, c = '', two }: { title: string; icons: React.ReactNode[]; c?: string; two?: boolean }) {
  return (
    <div className={`overflow-hidden border-b border-r border-[#eceef0] ${c}`}>
      <div className="mt-[21px] flex h-[18px] items-center pl-[20px]">
        <span className="whitespace-nowrap text-[15px] leading-none text-[#5b606a]">{title}</span>
        <span className="ml-[10px] flex h-[17px] w-[17px] items-center justify-center rounded-full bg-[#dcdfe4] pr-px font-['Liberation_Serif'] text-[13px] font-bold italic leading-none text-white">i</span>
      </div>
      <div className={`ml-[13px] mt-[6px] grid ${two ? 'w-[75px] grid-cols-2' : 'w-[112px] grid-cols-3'}`}>
        {icons.map((ic, i) => (
          <div key={i} className="flex h-[35px] items-center justify-center">
            <svg width="18" height="18" viewBox="0 0 18 18" fill="none" className="overflow-visible">{ic}</svg>
          </div>
        ))}
      </div>
    </div>
  );
}

function DesignPane() {
  return (
    <aside className="mt-[2px] w-[300px] shrink-0 border-l border-[#b5b5b5]">
      <div className="-mt-[2px] pr-[21px]">
        <PaneTitle title="设计工具" c="ml-[39px]" />
      </div>
      <div className="ml-[7px] grid h-[703px] w-[284px] grid-cols-2 grid-rows-[165px_164px_165px_130px_79px] bg-white">
        <Cell title="对齐" icons={alignIcons} />
        <Cell title="大小" icons={sizeIcons} />
        <Cell title="参考线布局" icons={guideIcons} />
        <Cell title="选择" icons={selectIcons} />
        <Cell title="矢量" icons={vectorIcons} />
        <Cell title="剪贴板" icons={clipIcons} />
        <Cell two title="吸附" icons={snapIcons} />
        <Cell two title="旋转" icons={rotateIcons} />
        <Cell c="border-b-0" title="拆合" icons={splitIcons} />
        <div />
      </div>
    </aside>
  );
}

function SelectionPane() {
  return (
    <aside className="mt-[2px] w-[310px] shrink-0 border-l border-[#b5b5b5]">
      <div className="-mt-[2px] pr-[18px]">
        <PaneTitle title="选择" c="ml-[38px]" />
      </div>
      <div className="mt-[9px] flex items-center pl-[14px] pr-[13px] text-[15px] leading-none text-[#444]">
        <div className="flex h-[31px] w-[82px] items-center justify-center border border-[#ababab] bg-white">全部显示</div>
        <div className="ml-[4px] flex h-[31px] w-[82px] items-center justify-center border border-[#ababab] bg-white">全部隐藏</div>
        <div className="-mt-px ml-auto flex h-[18px] w-[21px] items-center justify-center border border-[#ababab] bg-white">
          <Ico w={12} h={8}><path d="m.7 6.700 5.300-5 5.300 5" stroke="#666" strokeWidth="1.300" /></Ico>
        </div>
        <div className="-mt-px ml-[4px] flex h-[18px] w-[21px] items-center justify-center border border-[#ababab] bg-white">
          <Ico w={12} h={8}><path d="m.7 1.300 5.300 5 5.300-5" stroke="#666" strokeWidth="1.300" /></Ico>
        </div>
      </div>
      <div className="ml-[35px] mt-[18px] flex h-[24px] w-[261px] items-center bg-[#fbcbb5] pl-[4px] text-[15px] leading-none text-[#444]">
        <span className="flex-1 tracking-[0.2px]">!!矩形 1</span>
        <Ico w={20} h={14} c="mr-[32px]">
          <path d="M1 9C2 4 6 1.500 10 1.500S18 4 19 9" stroke="#333" strokeWidth="1.400" />
          <circle cx="10" cy="9.500" r="3.300" stroke="#333" strokeWidth="1.400" />
        </Ico>
      </div>
    </aside>
  );
}

/* ---------- status bar ---------- */

function StatusBar() {
  return (
    <footer className="flex h-[27px] shrink-0 items-center border-t border-[#c3c3c3] bg-[#f3f2f1] text-[15px] leading-none text-[#444]">
      <div className="ml-[10px] w-[182px] whitespace-nowrap text-[15px] tracking-[0.1px]">幻灯片 第 1 张，共 2 张</div>
      <Ico w={18} h={17}>
        <path d="M9 15V3Q6 1 1 1.500v12q5-.5 8 1.500M9 3q3-2 7.500-1.500V9M10 14l2.500 2 4.500-4.500" stroke="#555" strokeWidth="1.300" />
      </Ico>
      <div className="ml-[21px] whitespace-nowrap tracking-[0.1px]">中文(中国)</div>
      <Ico w={20} h={19} c="ml-auto">
        <path d="M0 9h20M0 13.500h20M0 18h20M6 5.500l4-4 4 4" stroke="#444" strokeWidth="1.400" />
      </Ico>
      <span className="ml-[2px]">备注</span>
      <Ico w={18} h={17} c="ml-[25px]">
        <path d="M1 1h16v11.500H7.500L4 16v-3.500H1Z" stroke="#444" strokeWidth="1.400" />
      </Ico>
      <span className="ml-[3px]">批注</span>
      <div className="ml-[24px] flex h-[26px] w-[50px] items-center justify-center bg-[#d0cecc]">
        <Ico w={18} h={16}>
          <path d="M1 1h16v14H1zM4.500 1v14M7.500 4h7v5h-7zM4.500 11.500h10" stroke="#444" strokeWidth="1.400" />
        </Ico>
      </div>
      <Ico w={18} h={16} c="ml-[16px]">
        <path d="M1 1h6v5H1zM11 1h6v5h-6zM1 10h6v5H1zM11 10h6v5h-6z" stroke="#444" strokeWidth="1.400" />
      </Ico>
      <Ico w={18} h={16} c="ml-[32px]">
        <path d="M9 2.500v12.500Q5 13 1 14V1.500Q6 .500 9 2.500 12 .500 17 1.500V14q-4-1-8 1M3.500 4.500h3M3.500 7.500h3M3.500 10.500h3M11.500 4.500h3M11.500 7.500h3M11.500 10.500h3" stroke="#555" strokeWidth="1.200" />
      </Ico>
      <Ico w={17} h={17} c="ml-[32px]">
        <path d="M0 1h17M2 1v9h13V1M5.500 5h6M8.500 10v6M4 16h9" stroke="#444" strokeWidth="1.400" />
      </Ico>
      <Ico w={11} h={11} c="ml-[23px]"><path d="M1 5.500h9" stroke="#444" strokeWidth="1.200" /></Ico>
      <div className="ml-[6px] flex h-[14px] w-[124px] items-center">
        <div className="h-px w-[38px] bg-[#aaa]" />
        <div className="h-[14px] w-[6px] bg-[#666]" />
        <div className="h-px w-[18px] bg-[#aaa]" />
        <div className="h-[7px] w-px bg-[#aaa]" />
        <div className="h-px flex-1 bg-[#aaa]" />
      </div>
      <Ico w={11} h={11} c="ml-[6px]"><path d="M.5 5.500h10M5.500.500v10" stroke="#444" strokeWidth="1.200" /></Ico>
      <span className="ml-[17px] w-[31px]">66%</span>
      <Ico w={19} h={19} c="ml-[14px] mr-[3px]">
        <path d="M5.500 5.500h8v8h-8z" stroke="#444" strokeWidth="1.400" />
        <path d="M7 3 9.500.800 12 3M7 16l2.500 2.200L12 16M3 7 .800 9.500 3 12M16 7l2.200 2.500L16 12" stroke="#444" strokeWidth="1.300" />
      </Ico>
    </footer>
  );
}

/* ---------- taskbar ---------- */

function Taskbar() {
  return (
    <div className="flex h-[38px] shrink-0 items-start overflow-hidden bg-gradient-to-r from-[#d3d9e3] via-[#dfdfe9] to-[#dde2ec] text-[#222]">
      <Ico w={20} h={21} c="ml-[20px] mt-[14px]">
        <path d="M0 3 8.500 1.800V10H0ZM9.500 1.600 20 .200V10H9.500ZM0 11h8.500v8.200L0 18ZM9.500 11H20v9.800L9.500 19.400Z" fill="#000" />
      </Ico>
      <div className="ml-[20px] flex h-[40px] w-[360px] items-start border border-[#c5c8ce] bg-white">
        <Ico w={20} h={21} c="ml-[15px] mt-[13px]">
          <circle cx="12.500" cy="7.500" r="6.500" stroke="#111" strokeWidth="1.500" />
          <path d="M8 12.500.800 20" stroke="#111" strokeWidth="1.500" />
        </Ico>
        <span className="ml-[14px] mt-[13px] text-[18.500px] leading-[22px]">搜索</span>
        <Ico w={78} h={32} c="ml-auto mr-[11px] mt-[8px]">
          <path d="M29 1q3 0 4 7t8 5q5 3 0 5-7 2-8 7-4 7-8 0-1-5-8-7-5-2 0-5 7 1 8-5t4-7Z" fill="#fbc61c" />
          <path d="M57 15q2 0 2 4t5 3q2 1.500 0 3-4 0-5 4-2 3-4 0-1-4-5-4-2-1.500 0-3 4 0 5-3t2-4Z" fill="#fcc93a" />
          <path d="M5 25q1 0 2 2l3 1q1 1-1 2l-2 2H3l-2-2q-1-1 1-2l1-2Z" fill="#16a5f3" />
          <circle cx="50" cy="4" r="3" fill="#f26430" />
          <circle cx="73" cy="29" r="3" fill="#7cc243" />
        </Ico>
      </div>
      <Ico w={20} h={20} c="ml-[20px] mt-[14px]">
        <path d="M.700 1v3h12.500V1M.700 19v-3h12.500v3M.700 6.500h12.500v7H.700zM18.500 1v4M18.500 10.500V20" stroke="#111" strokeWidth="1.400" />
        <path d="M16.500 6.500h3v3h-3z" fill="#111" />
      </Ico>
      <Ico w={27} h={25} c="ml-[40px] mt-[13px]">
        <path d="M0 1.500Q0 0 1.500 0h9l3 3H27v22H0Z" fill="#fdcb4b" />
        <path d="M0 3.500V1.500Q0 0 1.500 0h9l2 2-2 2Z" fill="#e0a210" />
        <path d="M5 25V13.500q0-1.500 1.500-1.500h15q1.500 0 1.500 1.500V25h-5v-6H10v6Z" fill="#3b96dd" />
      </Ico>
      <Ico w={30} h={30} c="ml-[34px] mt-[10px]">
        <circle cx="15" cy="15" r="14" fill="#e9e9e9" stroke="#c2c2c2" />
        <circle cx="14.500" cy="13.500" r="3.700" stroke="#777" strokeWidth="2" />
        <path d="m17 16 3 3.500" stroke="#777" strokeWidth="2.200" />
      </Ico>
      <Ico w={30} h={30} c="ml-[32px] mt-[9px]">
        <rect width="30" height="34" rx="3" fill="#0a95fd" />
        <path d="m19 6 5 9-13 13 5-12-3-6Z" fill="#9ed6fb" />
        <path d="m15 1-9 11 6 5-5 12 15-13-7-4 6-6Z" fill="#fff" />
      </Ico>
      <svg width="30" height="30" viewBox="0 0 30 30" className="ml-[32px] mt-[9px] shrink-0">
        <circle cx="15" cy="15" r="15" fill="#fbc116" />
        <path d="M2 7.500A15 15 0 0 0 14.500 30L21 18.500 15 15Z" fill="#2da24c" />
        <path d="M15 0A15 15 0 0 1 28.500 8.500H15A7 7 0 0 0 8.500 13L2 7.500A15 15 0 0 1 15 0Z" fill="#e33b2e" />
        <circle cx="15" cy="15" r="7.300" fill="#fff" />
        <circle cx="15" cy="15" r="5.700" fill="#3a7bea" />
      </svg>
      <div className="ml-[32px] mt-[9px] flex h-[32px] w-[30px] shrink-0 items-center justify-center rounded-[4px] bg-[#20272f] font-['Liberation_Mono'] text-[19px] font-bold leading-none tracking-[-1px] text-[#5047e5]">$W</div>
      <div className="ml-[33px] mt-[10px] flex h-[30px] w-[28px] shrink-0 items-center justify-center rounded-[5px] border border-[#ccc] bg-[#fafafa] pb-[3px] font-['Liberation_Serif'] text-[23px] font-bold leading-none text-[#333]">T</div>
      <div className="ml-[18px] flex h-[38px] w-[61px] shrink-0 bg-[#f1f3f8]">
        <Ico w={30} h={29} c="ml-[15px] mt-[11px]">
          <circle cx="15.500" cy="14" r="14" fill="#ed6c47" />
          <path d="M15.500 0a14 14 0 0 1 14 14h-14Z" fill="#ff8f6b" />
          <path d="M29.500 14a14 14 0 0 1-26 7l12-7Z" fill="#d35230" />
          <rect y="6" width="16" height="16" rx="1.500" fill="#c13b1b" />
          <text x="8" y="18.500" textAnchor="middle" fontSize="12.500" fontWeight="700" fill="#fff">P</text>
        </Ico>
      </div>
      <Ico w={22} h={28} c="ml-[20px] mt-[11px]">
        <path d="m11 0 6 4 1 9 3 4-4 10-6 1-9-7L1 14l5-4 1-6Z" fill="#8a5cf0" />
        <path d="m11 0-4 4-1 7 5 3 3-6Z" fill="#c5a9ff" />
        <path d="m1 14 6-2 3 10-8-2Z" fill="#6b35d9" />
        <path d="m7 17 9 1 1 9-6-2Z" fill="#4a1fa8" />
      </Ico>
      <Ico w={16} h={10} c="ml-auto mt-[20px]"><path d="m1 9 7-7.500L15 9" stroke="#111" strokeWidth="1.400" /></Ico>
      <Ico w={20} h={17} c="ml-[12px] mt-[17px]">
        <path d="M5 1h14v12H2V5.500M10.500 13v3.500M6 16.300h9M.800 1h4v4.500h-4z" stroke="#111" strokeWidth="1.300" />
      </Ico>
      <Ico w={20} h={15} c="ml-[10px] mt-[17px]">
        <path d="M6.500 6h9.500v6H5.500V9Z" fill="#111" />
        <path d="M18.500 6.500v4.500M3 9V7Q.800 7 .800 3h4.500q0 4-2.300 4M2 0v3M4.300 0v3M3.500 9.500V13.500h14V4.500H7.500" stroke="#111" strokeWidth="1.200" />
      </Ico>
      <Ico w={21} h={17} c="ml-[10px] mt-[16px]">
        <path d="M1 5.500h3l4.500-4v14l-4.500-4H1ZM11 6q1.500 2.500 0 5M14 4q3 4.500 0 9M17 2q4.500 6.500 0 13" stroke="#111" strokeWidth="1.200" />
      </Ico>
      <div className="ml-[8px] mt-[15px] flex h-[20px] w-[20px] shrink-0 items-center justify-center border-2 border-[#f4f4f4] bg-[#555] text-[15px] font-bold leading-none text-white">中</div>
      <Ico w={20} h={20} c="ml-[16px] mt-[14px]">
        <rect width="20" height="20" rx="3" fill="#000" />
        <path d="M4 4v8h4M8 7.500v4.500M10.500 3v13M16 4v8h-5M3 16h14" stroke="#fff" strokeWidth="2" />
      </Ico>
      <div className="ml-[16px] mt-[2px] w-[86px] shrink-0 text-center text-[15px] leading-[22px]">
        <div className="tracking-tight">15:11</div>
        <div className="whitespace-nowrap tracking-tight">2025/10/1</div>
      </div>
      <Ico w={20} h={22} c="ml-[19px] mt-[15px]">
        <path d="M0 0h20v16H13l-3 3.500L7 16H0Z" fill="#000" />
        <path d="M4 4.500h12M4 8h12M4 11.500h7" stroke="#fff" strokeWidth="1.300" />
      </Ico>
      <div className="ml-[25px] mr-[2px] h-[38px] w-px bg-[#b9bcc4]" />
    </div>
  );
}

export default function App() {
  return (
    <div className="relative flex h-[1052px] w-[1917px] flex-col overflow-hidden bg-[#f3f2f1] font-['Open_Sans','Noto_Sans_CJK_SC',sans-serif]">
      <TitleBar />
      <Tabs />
      <Ribbon />
      <QuickAccess />
      <div className="flex h-[758px] shrink-0 bg-[#e6e6e6]">
        <Thumbnails />
        <div className="mb-[2px] mt-[2px] w-px bg-[#b5b5b5]" />
        <Editor />
        <DesignPane />
        <SelectionPane />
      </div>
      <StatusBar />
      <Taskbar />
      <div className="pointer-events-none absolute left-[1527px] top-[60px] h-[109px] w-[82px] rounded-[2px] border-[3px] border-[#ff0f00]" />
      <svg width="96" height="90" viewBox="0 0 96 90" className="pointer-events-none absolute left-[1429px] top-[176px]">
        <path d="M8.500 85 82 14" stroke="#ff0f00" strokeWidth="5" strokeLinecap="round" />
        <path d="m92.500 4.500-7 17-5.500-6-6-5Z" fill="#ff0f00" stroke="#ff0f00" />
      </svg>
    </div>
  );
}
